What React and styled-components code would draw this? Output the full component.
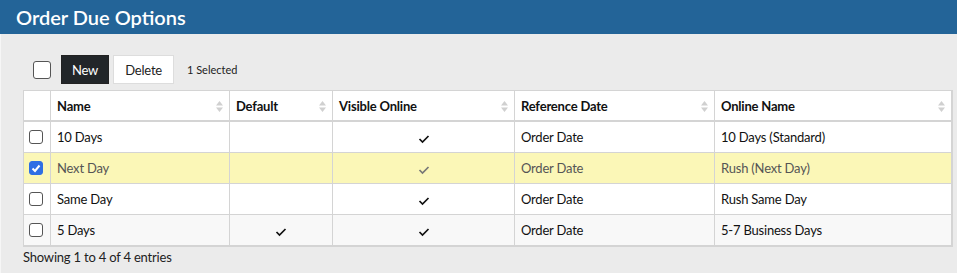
import React from 'react';
import styled, { createGlobalStyle } from 'styled-components';

const GlobalStyle = createGlobalStyle`
	body {
		margin: 0;
		background: #ebebeb;
		font-family: Lato, "Liberation Sans", sans-serif;
		color: #111;
	}
`

const Page = styled.div`
	width: 957px;
	height: 273px;
	background: #ebebeb;
	border-left: 1px solid #f6f6f6;
	box-sizing: border-box;
`

const TitleBar = styled.div`
	height: 34px;
	background: #236498;
	color: #fff;
	font-size: 20px;
	font-weight: 600;
	padding-left: 16px;
	line-height: 34px;
	margin-left: -1px;
`

const Content = styled.div`
	padding: 21px 6px 0 22px;
`

const Toolbar = styled.div`
	display: flex;
	align-items: center;
	height: 29px;
	margin-bottom: 6px;
	padding-left: 10px;
`

const Box = styled.span`
	width: 18px;
	height: 18px;
	box-sizing: border-box;
	border: 1px solid #555;
	border-radius: 3px;
	background: #fff;
	margin-right: 10px;
`

const Button = styled.button`
	height: 29px;
	padding: 0 ${p => p.dark ? 10 : 11}px;
	font-family: inherit;
	font-size: 13px;
	letter-spacing: -0.2px;
	border: 1px solid ${p => p.dark ? '#222' : '#ddd'};
	background: ${p => p.dark ? '#222629' : '#fff'};
	color: ${p => p.dark ? '#fff' : '#222'};
	margin-right: 4px;
	border-radius: 0;
`

const Selected = styled.span`
	font-size: 11px;
	margin-left: 9px;
	color: #222;
`

const Table = styled.table`
	border-collapse: collapse;
	table-layout: fixed;
	width: 928px;
	background: #fff;
	border-right: 2px solid #d4d4d4;
	border-bottom: 2px solid #d4d4d4;
	border-left: 1px solid #d4d4d4;
	border-top: 1px solid #d4d4d4;
	font-size: 13px;
	letter-spacing: -0.2px;
`

const Th = styled.th`
	height: 29px;
	text-align: left;
	font-weight: 700;
	padding: 0 6px;
	border-right: 1px solid #d4d4d4;
	border-bottom: 2px solid #d4d4d4;
	position: relative;
`

const Sort = styled.svg`
	position: absolute;
	right: 6px;
	top: 10px;
`

const Row = styled.tr`
	background: ${p => p.bg};
	color: ${p => p.selected ? '#555' : '#111'};
`

const Td = styled.td`
	height: 30px;
	padding: 0 6px;
	border-right: 1px solid #d4d4d4;
	border-bottom: 1px solid #d4d4d4;
	text-align: ${p => p.center ? 'center' : 'left'};
	white-space: nowrap;
`

const CbCell = styled(Td)`
	padding: 0 0 0 5px;
`

const RowBox = styled.span`
	display: block;
	width: 14px;
	height: 14px;
	box-sizing: border-box;
	border: 1px solid #555;
	border-radius: 3px;
	background: #fff;
`

const CheckedBox = styled(RowBox)`
	background: #2f6fe4;
	border-color: #2f6fe4;
	display: flex;
	align-items: center;
	justify-content: center;
`

const Footer = styled.div`
	font-size: 13px;
	line-height: 16px;
	margin-top: 2px;
	letter-spacing: -0.2px;
	color: #222;
`

const SortIcon = () => (
	<Sort width="7" height="11" viewBox="0 0 7 11">
		<path d="M3.5 0 L7 4.5 H0 Z M0 6.5 H7 L3.5 11 Z" fill="#d0d0d0" />
	</Sort>
)

const Tick = ({ color }) => (
	<svg width="12" height="10" viewBox="0 0 12 10" style={{ verticalAlign: 'middle' }}>
		<path d="M1.5 5 L4.5 8 L10.5 2" fill="none" stroke={color} strokeWidth="1.7" />
	</svg>
)

const cols = [27, 179, 103, 182, 200, 237]
const heads = ['Name', 'Default', 'Visible Online', 'Reference Date', 'Online Name']

const rows = [
	{ name: '10 Days', def: false, vis: true, ref: 'Order Date', online: '10 Days (Standard)', bg: '#fff' },
	{ name: 'Next Day', def: false, vis: true, ref: 'Order Date', online: 'Rush (Next Day)', bg: '#fbf7b7', selected: true },
	{ name: 'Same Day', def: false, vis: true, ref: 'Order Date', online: 'Rush Same Day', bg: '#fff' },
	{ name: '5 Days', def: true, vis: true, ref: 'Order Date', online: '5-7 Business Days', bg: '#f8f8f8' },
]

const App = () => {
	return (
		<Page>
			<GlobalStyle />
			<TitleBar>Order Due Options</TitleBar>
			<Content>
				<Toolbar>
					<Box />
					<Button dark>New</Button>
					<Button>Delete</Button>
					<Selected>1 Selected</Selected>
				</Toolbar>
				<Table>
					<colgroup>
						{cols.map((w, i) => <col key={i} style={{ width: w }} />)}
					</colgroup>
					<thead>
						<tr>
							<Th />
							{heads.map(h => (
								<Th key={h}>{h}<SortIcon /></Th>
							))}
						</tr>
					</thead>
					<tbody>
						{rows.map(r => {
							const tc = r.selected ? '#777' : '#111'
							return (
								<Row key={r.name} bg={r.bg} selected={r.selected}>
									<CbCell>
										{r.selected ? (
											<CheckedBox>
												<svg width="10" height="9" viewBox="0 0 10 9">
													<path d="M1.5 4.5 L4 7 L8.5 1.5" fill="none" stroke="#fff" strokeWidth="2" />
												</svg>
											</CheckedBox>
										) : <RowBox />}
									</CbCell>
									<Td>{r.name}</Td>
									<Td center>{r.def && <Tick color={tc} />}</Td>
									<Td center>{r.vis && <Tick color={tc} />}</Td>
									<Td>{r.ref}</Td>
									<Td>{r.online}</Td>
								</Row>
							)
						})}
					</tbody>
				</Table>
				<Footer>Showing 1 to 4 of 4 entries</Footer>
			</Content>
		</Page>
	)
}

export default App;
